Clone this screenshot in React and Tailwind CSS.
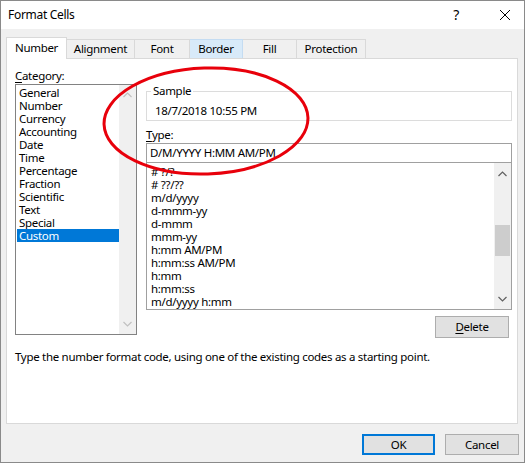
import React from "react";

const font = { fontFamily: '"Noto Sans", "Segoe UI", sans-serif' };

function Chevron({ dir = "up", color = "#606060" }) {
  return (
    <svg width="9" height="6" viewBox="0 0 9 6">
      {dir === "up" ? (
        <polyline points="0.5,5 4.5,1 8.5,5" fill="none" stroke={color} strokeWidth="1.2" />
      ) : (
        <polyline points="0.5,1 4.5,5 8.5,1" fill="none" stroke={color} strokeWidth="1.2" />
      )}
    </svg>
  );
}

const categories = [
  "General",
  "Number",
  "Currency",
  "Accounting",
  "Date",
  "Time",
  "Percentage",
  "Fraction",
  "Scientific",
  "Text",
  "Special",
  "Custom",
];

const formats = [
  "# ?/?",
  "# ??/??",
  "m/d/yyyy",
  "d-mmm-yy",
  "d-mmm",
  "mmm-yy",
  "h:mm AM/PM",
  "h:mm:ss AM/PM",
  "h:mm",
  "h:mm:ss",
  "m/d/yyyy h:mm",
];

export default function App() {
  return (
    <div
      className="relative w-[525px] h-[463px] bg-[#f0f0f0] border border-[#8a8a8a] flex flex-col text-[11.5px] tracking-[-0.3px] text-black overflow-hidden"
      style={font}
    >
      {/* Title bar */}
      <div className="h-[28px] bg-white flex items-center pl-[7px] shrink-0">
        <span className="text-[12px]">Format Cells</span>
        <span className="ml-auto mr-[40px] text-[14px] leading-none">?</span>
        <svg width="12" height="12" viewBox="0 0 12 12" className="mr-[13px]">
          <path d="M1 1 L11 11 M11 1 L1 11" stroke="#000" strokeWidth="1" />
        </svg>
      </div>

      {/* Tabs */}
      <div className="flex items-end ml-[5px] mt-[7px] h-[22px] relative z-10">
        <div className="w-[61px] h-[22px] bg-white border border-b-0 border-[#d9d9d9] flex items-center justify-center -mb-px pb-[2px]">
          Number
        </div>
        <div className="w-[68px] h-[19px] border-t border-r border-[#d9d9d9] flex items-center justify-center">
          Alignment
        </div>
        <div className="w-[55px] h-[19px] border-t border-r border-[#d9d9d9] flex items-center justify-center">
          Font
        </div>
        <div className="w-[53px] h-[19px] border-t border-r border-[#c4dcf2] bg-[#d8eaf9] flex items-center justify-center">
          Border
        </div>
        <div className="w-[54px] h-[19px] border-t border-r border-[#d9d9d9] flex items-center justify-center">
          Fill
        </div>
        <div className="w-[69px] h-[19px] border-t border-r border-[#d9d9d9] flex items-center justify-center">
          Protection
        </div>
      </div>

      {/* Panel */}
      <div className="ml-[5px] w-[512px] h-[366px] bg-white border border-[#d9d9d9] flex flex-col">
        <div className="flex pl-[8px] pt-[9px]">
          {/* Left column */}
          <div className="w-[122px] flex flex-col">
            <div className="h-[16px] leading-[16px]">
              <span className="underline underline-offset-2">C</span>ategory:
            </div>
            <div className="h-[251px] border border-[#828282] flex p-px">
              <div className="flex-1 flex flex-col">
                {categories.map((c) => (
                  <div
                    key={c}
                    className={
                      "h-[13px] leading-[13px] pl-[2px] " +
                      (c === "Custom" ? "bg-[#0078d7] text-white" : "")
                    }
                  >
                    {c}
                  </div>
                ))}
              </div>
              <div className="w-[17px] -mr-px -my-px bg-[#f0f0f0] flex flex-col items-center justify-between py-[7px]">
                <Chevron dir="up" color="#c0c0c0" />
                <Chevron dir="down" color="#c0c0c0" />
              </div>
            </div>
          </div>

          {/* Right column */}
          <div className="w-[366px] ml-[9px] flex flex-col">
            <div className="relative mt-[23px] h-[30px] border border-[#dcdcdc]">
              <span className="absolute left-[4px] -top-[9px] bg-white px-[2px] leading-[16px]">
                Sample
              </span>
              <div className="pl-[8px] pt-[11px] leading-[16px]">18/7/2018 10:55 PM</div>
            </div>
            <div className="mt-[6px] h-[16px] leading-[16px]">
              <span className="underline underline-offset-2">T</span>ype:
            </div>
            <div className="h-[20px] border border-[#a0a0a0] flex items-center pl-[3px]">
              D/M/YYYY H:MM AM/PM
            </div>
            <div className="-mt-px h-[148px] border border-[#a0a0a0] flex">
              <div className="flex-1 flex flex-col pt-[2px] pl-[4px]">
                {formats.map((f) => (
                  <div key={f} className="h-[13px] leading-[13px] whitespace-nowrap">
                    {f}
                  </div>
                ))}
              </div>
              <div className="w-[17px] bg-[#f0f0f0] flex flex-col items-center">
                <div className="mt-[8px]">
                  <Chevron dir="up" />
                </div>
                <div className="mt-[48px] w-[15px] h-[31px] bg-[#cdcdcd]" />
                <div className="mt-auto mb-[7px]">
                  <Chevron dir="down" />
                </div>
              </div>
            </div>
            <div className="flex justify-end mt-[6px] mr-[3px]">
              <div className="w-[74px] h-[22px] bg-[#e1e1e1] border border-[#adadad] flex items-center justify-center">
                <span>
                  <span className="underline underline-offset-2">D</span>elete
                </span>
              </div>
            </div>
          </div>
        </div>
        <div className="pl-[8px] mt-[11px] leading-[16px]">
          Type the number format code, using one of the existing codes as a starting point.
        </div>
      </div>

      {/* Buttons */}
      <div className="flex justify-end mt-[10px] mr-[5px] gap-[10px]">
        <div className="w-[73px] h-[21px] bg-[#e1e1e1] border-2 border-[#0078d7] flex items-center justify-center">
          OK
        </div>
        <div className="w-[74px] h-[21px] bg-[#e1e1e1] border border-[#adadad] flex items-center justify-center">
          Cancel
        </div>
      </div>

      {/* Red ellipse annotation */}
      <svg
        className="absolute left-0 top-0 pointer-events-none"
        width="525"
        height="463"
        viewBox="0 0 525 463"
      >
        <ellipse
          cx="205"
          cy="120"
          rx="102"
          ry="53"
          fill="none"
          stroke="#e8000b"
          strokeWidth="3"
          transform="rotate(-2 205 120)"
        />
      </svg>
    </div>
  );
}
